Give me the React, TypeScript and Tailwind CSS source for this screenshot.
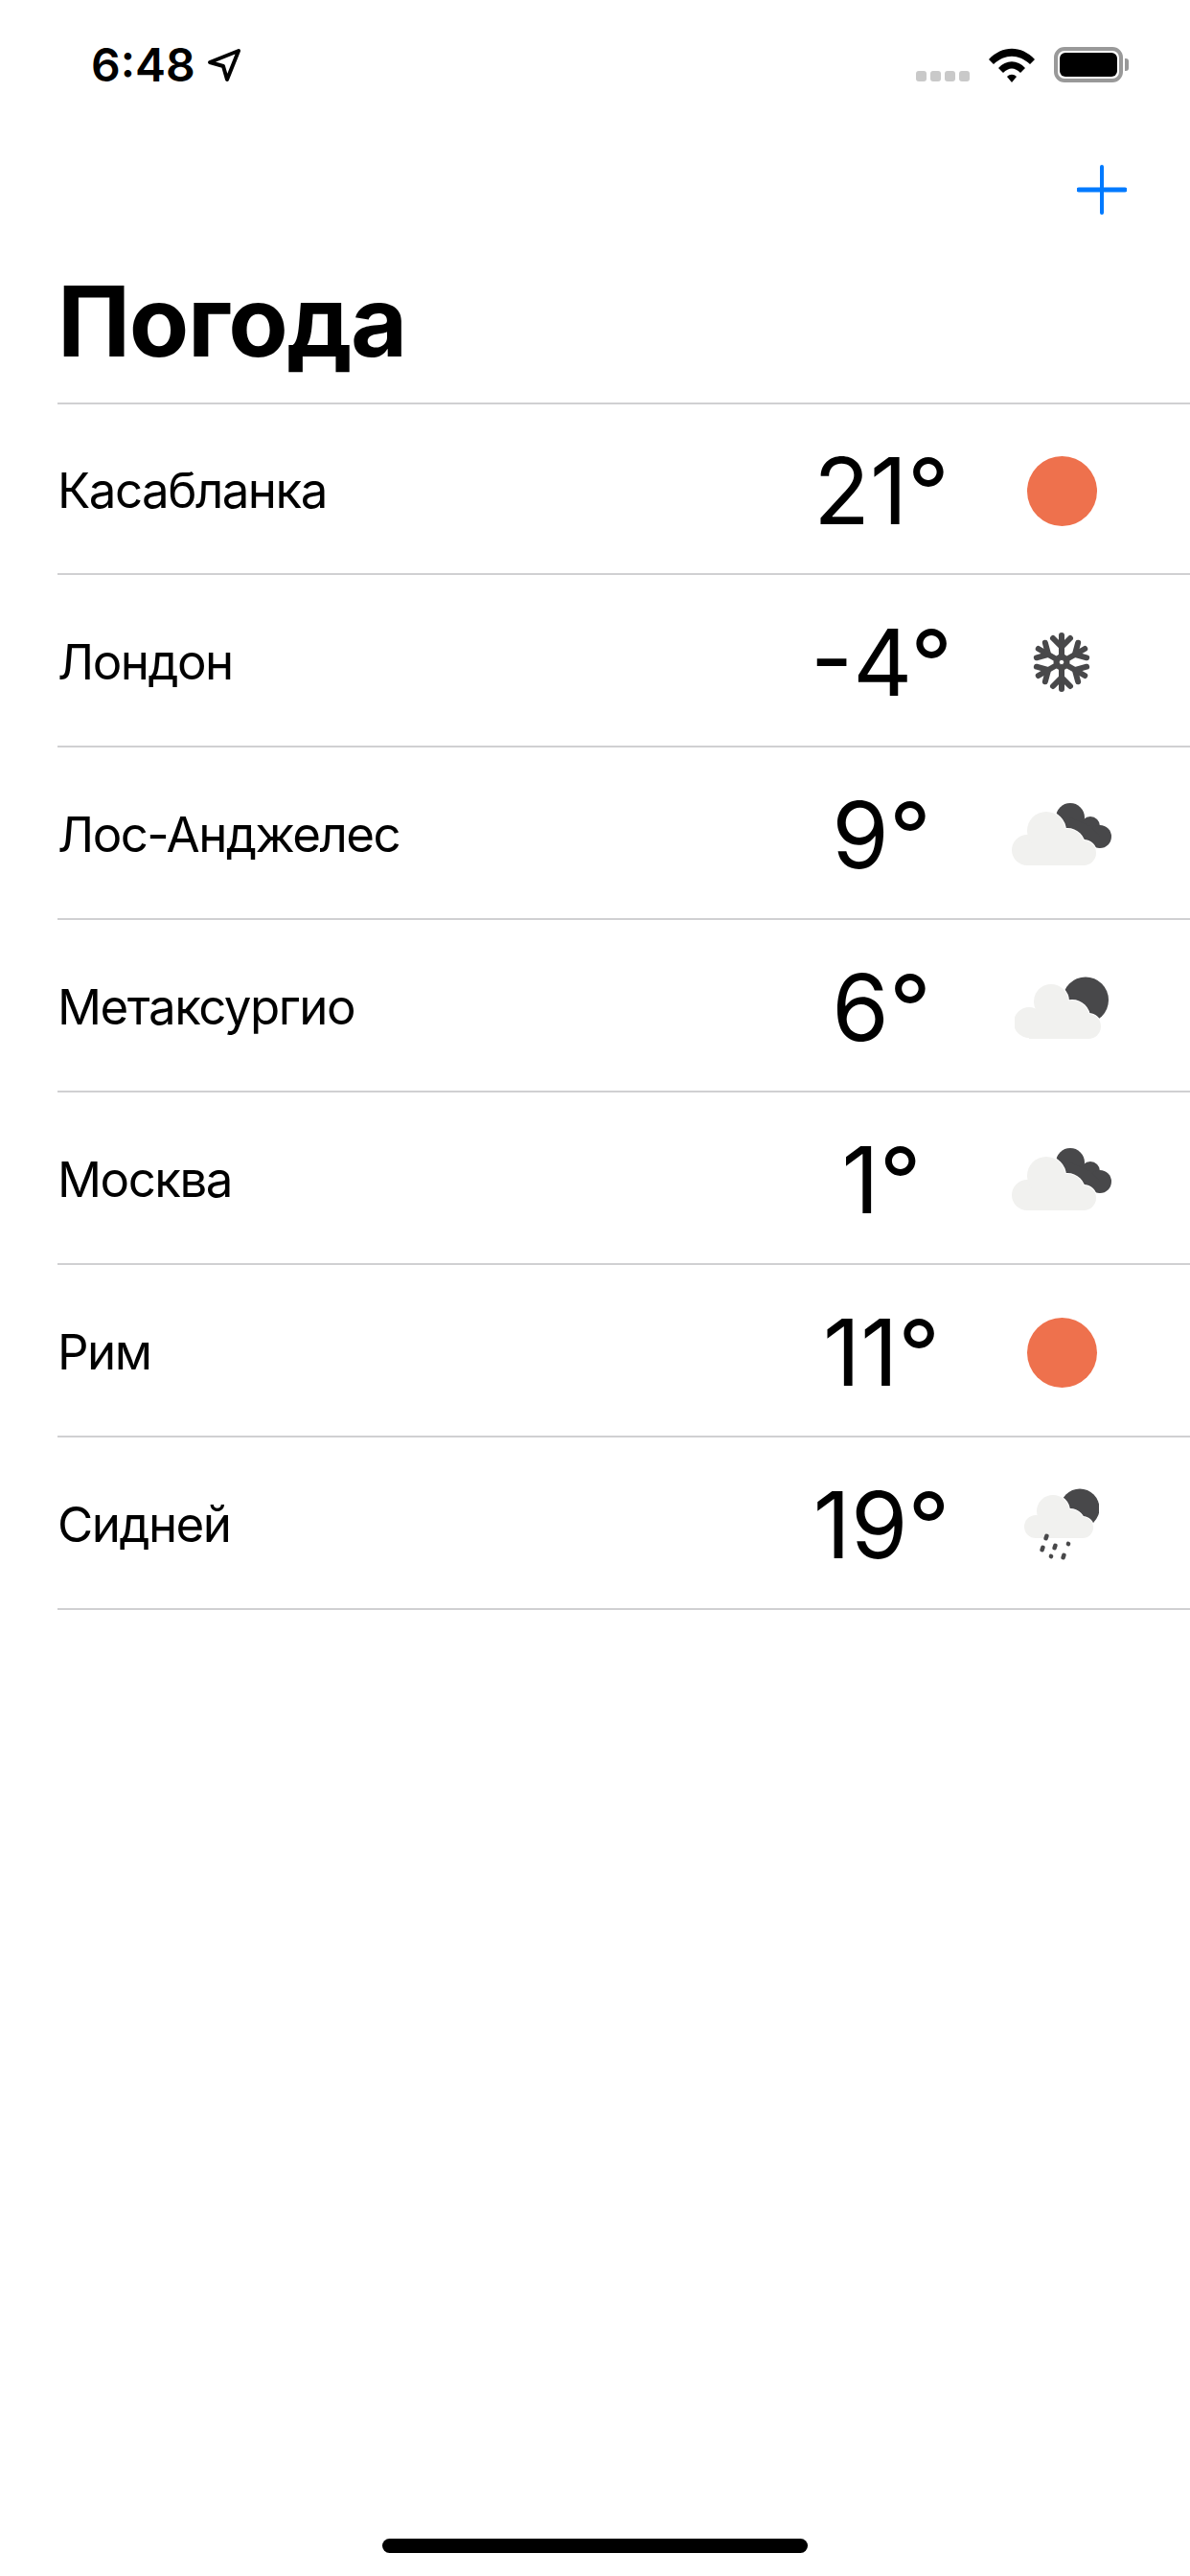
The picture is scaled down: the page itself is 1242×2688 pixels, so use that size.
const cities = [
  { name: "Касабланка", temp: "21°", icon: "sun" },
  { name: "Лондон", temp: "-4°", icon: "snow" },
  { name: "Лос-Анджелес", temp: "9°", icon: "clouds" },
  { name: "Метаксургио", temp: "6°", icon: "moon" },
  { name: "Москва", temp: "1°", icon: "clouds" },
  { name: "Рим", temp: "11°", icon: "sun" },
  { name: "Сидней", temp: "19°", icon: "rain" },
];

const DARK = "#48484a";
const CLOUD = "#f1f1ef";

function Snowflake() {
  const arm = (
    <g>
      <path d="M0 -5V-28" />
      <path d="M-9 -25L0 -16L9 -25" />
    </g>
  );
  return (
    <svg width="60" height="64" viewBox="-30 -32 60 64" fill="none" stroke={DARK} strokeWidth="6" strokeLinecap="round">
      {[0, 60, 120, 180, 240, 300].map((r) => (
        <g key={r} transform={`rotate(${r})`}>
          {arm}
        </g>
      ))}
      <circle r="6" strokeWidth="5" />
    </svg>
  );
}

// cloud body built from lobes, the white outline keeps it apart from the dark part behind
function Lobes({ circles, x, y, w, h }: { circles: number[][]; x: number; y: number; w: number; h: number }) {
  return (
    <>
      <g fill="#fff" stroke="#fff" strokeWidth="2">
        {circles.map(([cx, cy, r]) => (
          <circle key={`${cx}-${cy}`} cx={cx} cy={cy} r={r} />
        ))}
      </g>
      <g fill={CLOUD}>
        {circles.map(([cx, cy, r]) => (
          <circle key={`${cx}-${cy}`} cx={cx} cy={cy} r={r} />
        ))}
        <rect x={x} y={y} width={w} height={h} />
      </g>
    </>
  );
}

function Clouds() {
  return (
    <svg width="104" height="66" viewBox="0 0 104 66">
      <g fill={DARK}>
        <circle cx="61" cy="15" r="15" />
        <circle cx="82" cy="24" r="10" />
        <circle cx="92" cy="35" r="12" />
        <path d="M61 15L82 24L92 35L92 47L60 30Z" />
      </g>
      <Lobes
        circles={[
          [16, 49, 16],
          [36, 29, 20],
          [58, 45, 18],
          [75, 52, 13],
        ]}
        x={16}
        y={42}
        w={59}
        h={23}
      />
    </svg>
  );
}

function MoonCloud() {
  return (
    <svg width="98" height="65" viewBox="0 0 98 65">
      <circle cx="74" cy="24.5" r="24" fill={DARK} />
      <Lobes
        circles={[
          [15, 48, 16],
          [38, 26, 18],
          [60, 43, 18],
          [77, 52, 13],
        ]}
        x={15}
        y={40}
        w={62}
        h={25}
      />
    </svg>
  );
}

function RainCloud() {
  const drops = [
    [23, 51, 7],
    [19, 63, 7],
    [32, 61, 7],
    [46, 58, 4.5],
    [28, 71, 4.5],
    [41, 71, 7],
  ];
  return (
    <svg width="78" height="76" viewBox="0 0 78 76">
      <circle cx="58" cy="21" r="20.5" fill={DARK} />
      <Lobes
        circles={[
          [12, 40, 12],
          [30, 24, 17],
          [48, 37, 15],
          [61, 41, 11],
        ]}
        x={12}
        y={36}
        w={49}
        h={16}
      />
      {drops.map(([x, y, h]) => (
        <rect key={`${x}-${y}`} x={x - 2.25} y={y - h / 2} width="4.5" height={h} rx="2" fill={DARK} transform={`rotate(20 ${x} ${y})`} />
      ))}
    </svg>
  );
}

function WeatherIcon({ icon }: { icon: string }) {
  if (icon === "sun") return <div className="h-[73px] w-[73px] rounded-full bg-[#ee714d]" />;
  if (icon === "snow") return <Snowflake />;
  if (icon === "clouds") return <Clouds />;
  if (icon === "moon") return <MoonCloud />;
  return <RainCloud />;
}

function StatusBar() {
  return (
    <div className="flex h-[134px] items-start justify-between pl-[95px] pr-[64px] pt-[49px]">
      <div className="flex items-center gap-[12px]">
        <span className="text-[48px] leading-[37px] font-semibold text-black">6:48</span>
        <svg width="36" height="36" viewBox="0 0 36 36" fill="none" stroke="#000" strokeWidth="4" strokeLinejoin="round">
          <path d="M3 15L33 3L21 33L17 19Z" />
        </svg>
      </div>
      <div className="flex items-end gap-[20px]">
        <div className="flex gap-[4px] pb-[1px]">
          <div className="h-[11px] w-[11px] rounded-[3px] bg-[#c9c9c9]" />
          <div className="h-[11px] w-[11px] rounded-[3px] bg-[#c9c9c9]" />
          <div className="h-[11px] w-[11px] rounded-[3px] bg-[#c9c9c9]" />
          <div className="h-[11px] w-[11px] rounded-[3px] bg-[#c9c9c9]" />
        </div>
        <svg width="48" height="36" viewBox="0 0 48 36">
          <path d="M0 12C14 -3 34 -3 48 12L43 17C31 6 17 6 5 17Z" />
          <path d="M10 21C18 12 30 12 38 21L33 26C27 20 21 20 15 26Z" />
          <path d="M19 30C22 27 26 27 29 30L24 36Z" />
        </svg>
        <div className="flex items-center gap-[2px]">
          <div className="h-[37px] w-[72px] rounded-[11px] border-[4px] border-[#999999] p-[2px]">
            <div className="h-full w-full rounded-[6px] bg-black" />
          </div>
          <div className="h-[13px] w-[4px] rounded-r-[3px] bg-[#999999]" />
        </div>
      </div>
    </div>
  );
}

export default function App() {
  return (
    <div className="relative flex h-[2688px] w-[1242px] flex-col overflow-hidden bg-white font-['Inter','Liberation_Sans',sans-serif] text-black">
      <StatusBar />
      <div className="flex h-[128px] items-start justify-end pr-[66px] pt-[38px]">
        <svg width="52" height="52" viewBox="0 0 52 52" stroke="#007aff" strokeLinecap="round">
          <path d="M26 2V50" strokeWidth="4" />
          <path d="M2 26H50" strokeWidth="5" />
        </svg>
      </div>
      <h1 className="flex h-[158px] items-start pl-[60px] pt-[31px] text-[102px] leading-[84px] font-bold tracking-[-1.4px]">Погода</h1>
      <div className="ml-[60px] border-t-[2px] border-[#d0d0d2]">
        {cities.map((city) => (
          <div key={city.name} className="flex h-[180px] items-center border-b-[2px] border-[#d0d0d2] pt-[4px] pr-[60px] first:h-[178px]">
            <span className="flex-1 text-[51px] tracking-[-1.5px]">{city.name}</span>
            <span className="w-[234px] pl-[6px] text-center text-[96px] leading-none">{city.temp}</span>
            <div className="flex w-[148px] items-center justify-center">
              <WeatherIcon icon={city.icon} />
            </div>
          </div>
        ))}
      </div>
      <div className="mt-auto mb-[24px] h-[15px] w-[444px] self-center rounded-full bg-black" />
    </div>
  );
}
